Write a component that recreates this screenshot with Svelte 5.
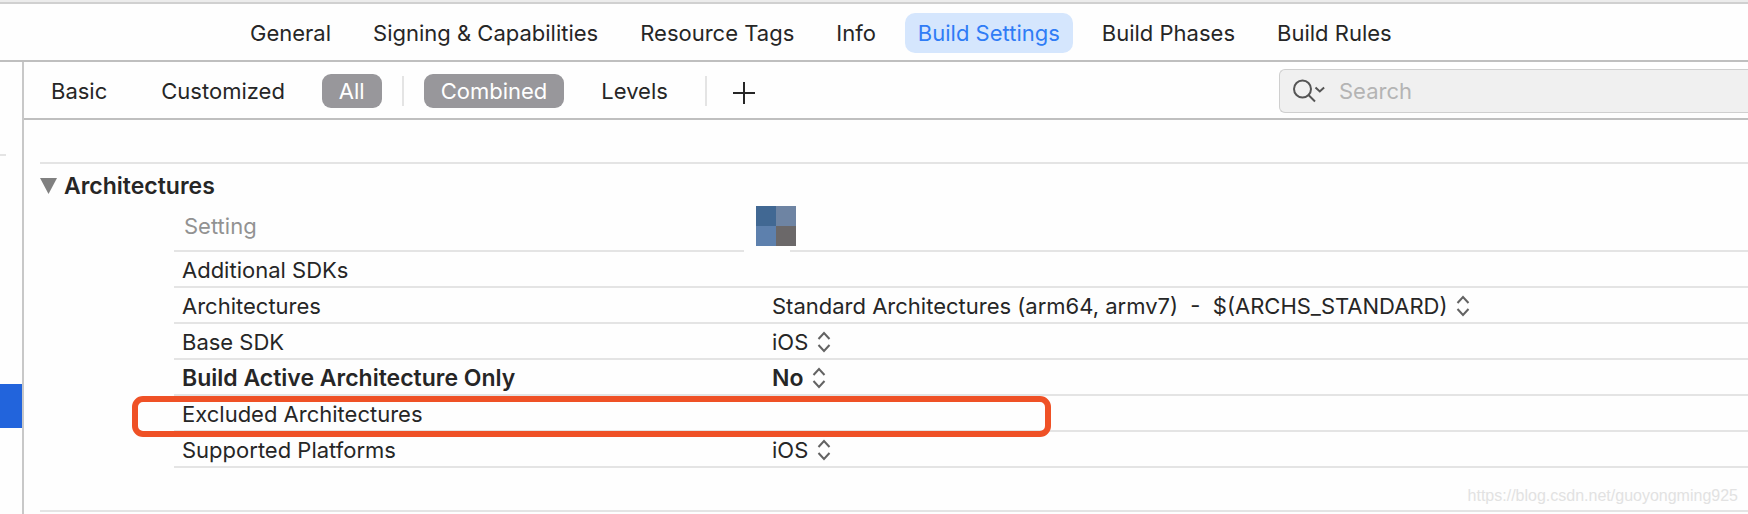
<script>
    const tabs = [
        'General',
        'Signing & Capabilities',
        'Resource Tags',
        'Info',
        'Build Settings',
        'Build Phases',
        'Build Rules'
    ]

    const rows = [
        { name: 'Additional SDKs' },
        { name: 'Architectures', value: 'Standard Architectures (arm64, armv7)\u00a0 -\u00a0 $(ARCHS_STANDARD)' },
        { name: 'Base SDK', value: 'iOS' },
        { name: 'Build Active Architecture Only', value: 'No', changed: true },
        { name: 'Excluded Architectures', marked: true },
        { name: 'Supported Platforms', value: 'iOS' }
    ]

    let activeTab = $state('Build Settings')
    let filter = $state('All')
    let view = $state('Combined')
    let open = $state(true)
</script>


<div class="window">
    <nav class="tabs" aria-label="Target editor">
        {#each tabs as tab}
            <button class="tab" class:active={tab === activeTab} onclick={() => activeTab = tab}>{tab}</button>
        {/each}
    </nav>

    <div class="body">
        <aside class="sidebar">
            <div class="sidebar-line"></div>
            <div class="sidebar-selected"></div>
        </aside>

        <main>
            <div class="toolbar">
                <div class="group">
                    {#each ['Basic', 'Customized', 'All'] as item}
                        <button class="scope" class:active={item === filter} onclick={() => filter = item}>{item}</button>
                    {/each}
                </div>
                <span class="divider"></span>
                <div class="group">
                    {#each ['Combined', 'Levels'] as item}
                        <button class="scope" class:active={item === view} onclick={() => view = item}>{item}</button>
                    {/each}
                </div>
                <span class="divider"></span>
                <button class="add" aria-label="Add build setting">
                    <svg width="22" height="22" viewBox="0 0 22 22"><path d="M11 0v22M0 11h22" /></svg>
                </button>
                <label class="search">
                    <svg width="34" height="24" viewBox="0 0 34 24">
                        <circle cx="10.5" cy="10" r="8.5" />
                        <path d="M16.5 16l6.500 6.500" />
                        <path class="chevron" d="M23.500 8.500l4.300 4 4.300-4" />
                    </svg>
                    <input type="text" placeholder="Search" aria-label="Search" />
                </label>
            </div>

            <section class="settings">
                <h2>
                    <button class="disclosure" aria-expanded={open} onclick={() => open = !open}>
                        <svg class:closed={!open} width="18" height="16" viewBox="0 0 18 16"><path d="M0 0h17L8.500 16z" /></svg>
                        Architectures
                    </button>
                </h2>

                {#if open}
                    <table>
                        <thead>
                            <tr>
                                <th class="name" scope="col">Setting</th>
                                <th class="target" scope="col" aria-label="Target">
                                    <svg width="40" height="40" viewBox="0 0 40 40" shape-rendering="crispEdges">
                                        <path fill="#416893" d="M0 0h20v20H0z" />
                                        <path fill="#6e84a3" d="M20 0h20v20H20z" />
                                        <path fill="#5d80ad" d="M0 20h20v20H0z" />
                                        <path fill="#6b6869" d="M20 20h20v20H20z" />
                                    </svg>
                                    <span class="smudge"></span>
                                </th>
                            </tr>
                        </thead>
                        <tbody>
                            {#each rows as row}
                                <tr class:changed={row.changed}>
                                    <td class="name">
                                        {row.name}
                                        {#if row.marked}<span class="marker"></span>{/if}
                                    </td>
                                    <td>
                                        {#if row.value}
                                            <label class="popup">
                                                <select aria-label={row.name}>
                                                    <option>{row.value}</option>
                                                </select>
                                                <svg width="14" height="22" viewBox="0 0 14 22">
                                                    <path d="M1.500 8L7 2l5.500 6M1.500 14L7 20l5.500-6" />
                                                </svg>
                                            </label>
                                        {/if}
                                    </td>
                                </tr>
                            {/each}
                        </tbody>
                    </table>
                {/if}
            </section>
            <div class="next-section"></div>
        </main>
    </div>

    <span class="watermark">https://blog.csdn.net/guoyongming925</span>
</div>


<style>
    :global(body) {
        margin: 0;
        background: #fefefe;
    }

    .window {
        position: relative;
        display: flex;
        flex-direction: column;
        box-sizing: border-box;
        min-height: 100vh;
        overflow: hidden;
        border-top: 2px solid #ececec;
        color: #262626;
        background: #fefefe;
        font-family: Inter, "Liberation Sans", sans-serif;
        font-size: 22px;
        line-height: 28px;
    }

    button, input, select {
        margin: 0;
        padding: 0;
        border: 0;
        background: none;
        color: inherit;
        font: inherit;
    }

    svg {
        flex: none;
        fill: none;
    }

    .tabs {
        display: flex;
        gap: 16px;
        padding: 9px 0 7px 237px;
        border-top: 2px solid #d0d0d0;
        border-bottom: 2px solid #bfbfbf;
        white-space: nowrap;
    }

    .tab {
        padding: 6px 13px;
        border-radius: 10px;
    }

    .tab.active {
        color: #2f7cf6;
        background: #d5e6fd;
    }

    .body {
        display: flex;
        flex: 1;
    }

    .sidebar {
        width: 22px;
        border-right: 2px solid #c8c8c8;
    }

    .sidebar-line {
        width: 6px;
        height: 2px;
        margin-top: 92px;
        background: #e4e4e4;
    }

    .sidebar-selected {
        height: 44px;
        margin-top: 228px;
        background: #2264dc;
    }

    main {
        flex: 1;
        min-width: 0;
    }

    .toolbar {
        display: flex;
        align-items: center;
        height: 54px;
        padding: 2px 0 0 10px;
        border-bottom: 2px solid #bfbfbf;
    }

    .group {
        display: flex;
        gap: 20px;
    }

    .scope {
        padding: 3px 17px;
        border-radius: 9px;
    }

    .scope.active {
        color: #fff;
        background: #98979b;
    }

    .divider {
        width: 2px;
        height: 30px;
        margin: 0 20px;
        background: #e4e4e4;
    }

    .add {
        display: flex;
        padding: 4px 6px 0;
    }

    .add path {
        stroke: #262626;
        stroke-width: 2;
    }

    .search {
        display: flex;
        align-items: center;
        gap: 13px;
        box-sizing: border-box;
        width: 469px;
        height: 44px;
        margin-left: auto;
        padding-left: 12px;
        border: 1px solid #cfcfcf;
        border-right: 0;
        border-radius: 6px 0 0 6px;
        background: #f0f0f0;
    }

    .search svg {
        stroke: #555;
        stroke-width: 2;
    }

    .search input {
        flex: 1;
        min-width: 0;
        outline: 0;
    }

    .search input::placeholder {
        color: #b4b4b4;
        opacity: 1;
    }

    .settings {
        margin: 42px 0 0 16px;
        padding-bottom: 42px;
        border-top: 2px solid #e4e4e4;
    }

    h2 {
        margin: 0;
        padding: 8px 0;
        font-size: 23px;
    }

    .disclosure {
        display: flex;
        align-items: center;
        gap: 6px;
        font-weight: 600;
    }

    .disclosure path {
        fill: #808080;
    }

    .closed {
        transform: rotate(-90deg);
    }

    table {
        width: calc(100% - 134px);
        margin-left: 134px;
        border-spacing: 0;
        table-layout: fixed;
    }

    th, td {
        position: relative;
        box-sizing: border-box;
        height: 36px;
        padding: 2px 8px 0;
        border-bottom: 2px solid #e4e4e4;
        text-align: left;
        white-space: nowrap;
    }

    th {
        height: 44px;
        padding: 0 10px 6px;
        color: #929292;
        font-weight: 400;
    }

    .name {
        width: 590px;
    }

    .target {
        padding: 0;
    }

    .target svg {
        position: absolute;
        top: -2px;
        left: -8px;
    }

    /* fades the header line out below the target icon */
    .smudge {
        position: absolute;
        bottom: -2px;
        left: -20px;
        width: 46px;
        height: 2px;
        background: #fefefe;
    }

    .changed {
        font-size: 23px;
        font-weight: 600;
    }

    .popup {
        display: flex;
        align-items: center;
        gap: 9px;
    }

    .popup select {
        appearance: none;
        field-sizing: content;
        outline: 0;
    }

    .popup path {
        stroke: #636363;
        stroke-width: 2;
    }

    .marker {
        position: absolute;
        z-index: 1;
        top: 0;
        left: -42px;
        box-sizing: border-box;
        width: 919px;
        height: 41px;
        border: 6px solid #ef5126;
        border-radius: 11px;
        pointer-events: none;
    }

    .next-section {
        height: 2px;
        margin-left: 16px;
        background: #e4e4e4;
    }

    .watermark {
        position: absolute;
        right: 10px;
        bottom: 4px;
        color: #e2e2e2;
        font-family: "Liberation Sans", Arial, sans-serif;
        font-size: 16px;
    }
</style>
